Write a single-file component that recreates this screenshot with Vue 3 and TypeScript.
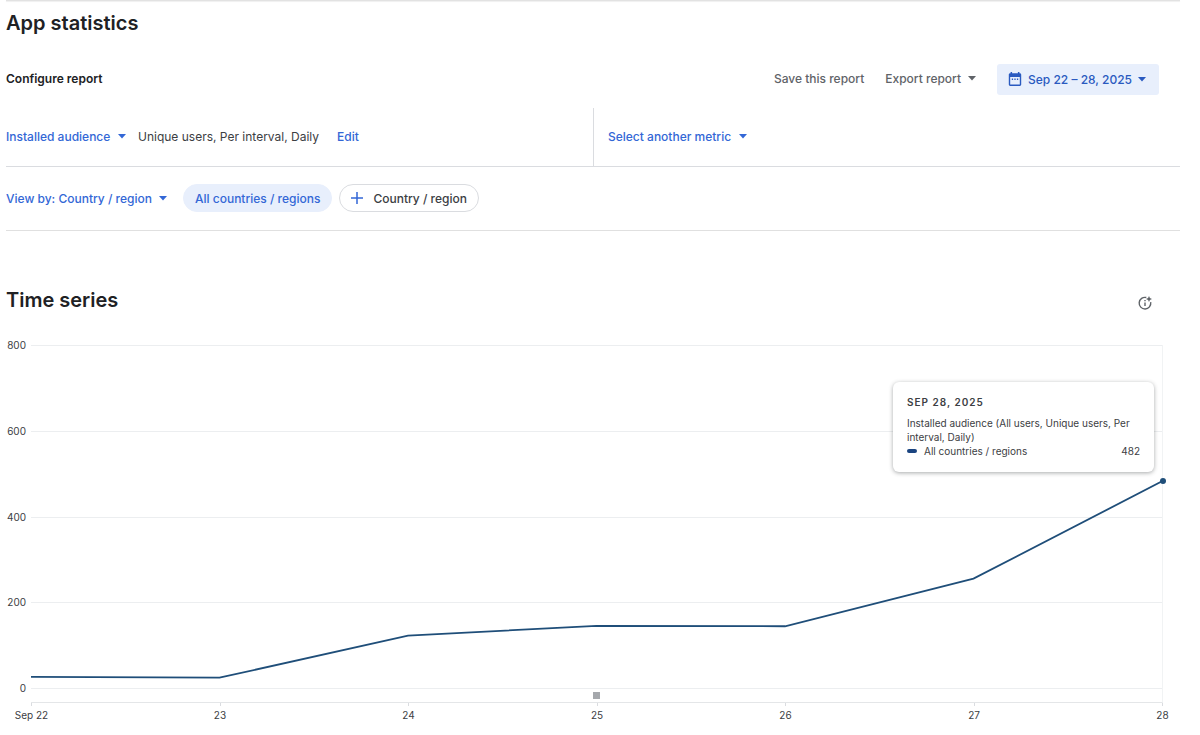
<script setup lang="ts">
import { computed, ref } from 'vue'

interface Point {
  label: string
  value: number
}

const metric = ref('Installed audience')
const secondMetric = ref('Select another metric')
const viewBy = ref('View by: Country / region')

const points: Point[] = [
  { label: 'Sep 22', value: 26 },
  { label: '23', value: 24 },
  { label: '24', value: 122 },
  { label: '25', value: 145 },
  { label: '26', value: 144 },
  { label: '27', value: 255 },
  { label: '28', value: 482 },
]
const yTicks = [800, 600, 400, 200, 0]

const step = 100
const scaleY = (value: number) => 800 - value
const line = computed(() => points.map((p, i) => `${i * step},${scaleY(p.value)}`).join(' '))
const last = computed(() => points[points.length - 1])
const lastTop = computed(() => `${(scaleY(last.value.value) / 800) * 100}%`)
</script>

<template>
  <main class="page">
    <div class="top-edge"></div>
    <h1 class="title">App statistics</h1>

    <section class="toolbar">
      <h2 class="subtitle">Configure report</h2>
      <div class="actions">
        <button type="button" class="text-button">Save this report</button>
        <button type="button" class="text-button">
          Export report
          <svg class="caret" viewBox="0 0 8 5"><path d="M0 0h8L4 4.600z" /></svg>
        </button>
        <button type="button" class="date-button">
          <svg class="calendar" viewBox="0 0 14 14">
            <path fill-rule="evenodd" d="M2.600 0h1.500v1.300h5.800V0h1.500v1.300h.4c.8 0 1.400.6 1.400 1.400v9.900c0 .8-.6 1.400-1.400 1.400H2.200c-.8 0-1.400-.6-1.400-1.400V2.700c0-.8.6-1.400 1.400-1.400h.4zM2.200 5v7.600h9.600V5z" />
            <path d="M3.800 6.600h1.300v1.300H3.800zM6.350 6.600h1.300v1.300h-1.300zM8.900 6.600h1.300v1.300H8.900z" />
          </svg>
          <span>Sep 22 – 28, 2025</span>
          <svg class="caret" viewBox="0 0 8 5"><path d="M0 0h8L4 4.600z" /></svg>
        </button>
      </div>
    </section>

    <section class="metrics">
      <div class="metric">
        <span class="dropdown">
          <select v-model="metric" aria-label="Metric">
            <option>Installed audience</option>
          </select>
          <svg class="caret" viewBox="0 0 8 5"><path d="M0 0h8L4 4.600z" /></svg>
        </span>
        <span class="detail">Unique users, Per interval, Daily</span>
        <a href="#edit" class="edit">Edit</a>
      </div>
      <div class="metric second">
        <span class="dropdown">
          <select v-model="secondMetric" aria-label="Second metric">
            <option>Select another metric</option>
          </select>
          <svg class="caret" viewBox="0 0 8 5"><path d="M0 0h8L4 4.600z" /></svg>
        </span>
      </div>
    </section>

    <section class="filters">
      <span class="dropdown">
        <select v-model="viewBy" aria-label="View by">
          <option>View by: Country / region</option>
        </select>
        <svg class="caret" viewBox="0 0 8 5"><path d="M0 0h8L4 4.600z" /></svg>
      </span>
      <div class="chips">
        <button type="button" class="chip selected">All countries / regions</button>
        <button type="button" class="chip">
          <svg class="plus" viewBox="0 0 12 12"><path d="M6 0v12M0 6h12" /></svg>
          Country / region
        </button>
      </div>
    </section>

    <section class="series">
      <header class="series-head">
        <h2 class="title">Time series</h2>
        <button type="button" class="info" aria-label="Chart insights">
          <svg viewBox="0 0 14 14">
            <path class="ring" d="M8.300 1.500A5.800 5.800 0 1 0 12.700 6.200" />
            <path class="stem" d="M7 6.400v3.600M7 4v1.300" />
            <path class="spark" d="M11 0l.9 2.100L14 3l-2.100.9L11 6l-.9-2.100L8 3l2.100-.9z" />
          </svg>
        </button>
      </header>

      <div class="chart">
        <div class="y-axis">
          <span v-for="tick in yTicks" :key="tick">{{ tick }}</span>
        </div>
        <div class="plot">
          <div class="area">
            <div class="grid">
              <i v-for="tick in yTicks" :key="tick"></i>
            </div>
            <svg class="line" viewBox="0 0 600 800" preserveAspectRatio="none">
              <polyline :points="line" />
            </svg>
            <span class="dot" :style="{ top: lastTop }"></span>
            <div class="tooltip" role="tooltip">
              <strong>SEP 28, 2025</strong>
              <p>Installed audience (All users, Unique users, Per interval, Daily)</p>
              <div class="row">
                <i class="swatch"></i>
                <span class="name">All countries / regions</span>
                <span>{{ last.value }}</span>
              </div>
            </div>
          </div>
          <div class="events"><i class="event"></i></div>
          <div class="x-axis">
            <span v-for="p in points" :key="p.label">{{ p.label }}</span>
          </div>
        </div>
      </div>
    </section>
  </main>
</template>

<style>
body {
  background: #fff;
}
</style>

<style scoped>
.page {
  box-sizing: border-box;
  padding: 0 20px 0 6px;
  font-family: Inter, 'Liberation Sans', sans-serif;
  font-size: 12px;
  color: #3c4043;
}
.top-edge {
  height: 1px;
  background: #e2e2e2;
  box-shadow: 0 1px 1px #eee;
}
.title {
  margin: 0;
  font-size: 20px;
  line-height: 28px;
  font-weight: 600;
  color: #202124;
}
h1.title {
  padding-top: 8px;
}
button,
select {
  font: inherit;
  font-weight: 500;
  margin: 0;
  padding: 0;
  border: 0;
  background: none;
  color: inherit;
}
.toolbar {
  display: flex;
  align-items: center;
  justify-content: space-between;
  margin-top: 27px;
  padding-right: 21px;
}
.subtitle {
  margin: 0;
  padding-bottom: 2px;
  font-size: 12px;
  font-weight: 600;
  color: #202124;
}
.actions {
  display: flex;
  align-items: center;
  gap: 21px;
}
.text-button {
  display: flex;
  align-items: center;
  gap: 7px;
  padding-bottom: 2px;
  color: #5f6368;
}
.caret {
  width: 8px;
  height: 5px;
  fill: currentColor;
}
.date-button {
  display: flex;
  align-items: center;
  height: 31px;
  padding: 0 13px 1px 11px;
  gap: 6px;
  border-radius: 3px;
  background: #e8effc;
  color: #2a5ac0;
}
.calendar {
  width: 14px;
  height: 14px;
  fill: currentColor;
}
.metrics {
  display: flex;
  margin-top: 13px;
  border-bottom: 1px solid #dadce0;
}
.metric {
  box-sizing: border-box;
  flex: 1 1 50%;
  display: flex;
  align-items: center;
  height: 58px;
  padding-bottom: 2px;
}
.second {
  padding-left: 14px;
  border-left: 1px solid #dadce0;
}
.dropdown {
  display: inline-grid;
  align-items: center;
  color: #3367d6;
}
.dropdown select {
  grid-area: 1 / 1;
  appearance: none;
  padding-right: 15px;
}
.dropdown .caret {
  grid-area: 1 / 1;
  justify-self: end;
  pointer-events: none;
}
.detail {
  margin: 0 18px 0 12px;
}
.edit {
  color: #3367d6;
  font-weight: 500;
  text-decoration: none;
}
.filters {
  display: flex;
  align-items: center;
  gap: 16px;
  box-sizing: border-box;
  height: 64px;
  padding-bottom: 1px;
  border-bottom: 1px solid #e0e0e0;
}
.chips {
  display: flex;
  gap: 7px;
}
.chip {
  box-sizing: border-box;
  display: flex;
  align-items: center;
  gap: 10px;
  height: 28px;
  padding: 0 11px;
  border: 1px solid #dadce0;
  border-radius: 14px;
}
.chip.selected {
  border-color: #e8effc;
  background: #e8effc;
  color: #3367d6;
}
.plus {
  width: 12px;
  height: 12px;
  fill: none;
  stroke: #3367d6;
  stroke-width: 1.5;
}
.series {
  padding: 55px 17px 0 0;
}
.series-head {
  display: flex;
  align-items: center;
  justify-content: space-between;
  padding-right: 11px;
}
.info {
  padding-top: 6px;
}
.info svg {
  display: block;
  width: 14px;
  height: 14px;
}
.ring,
.stem {
  fill: none;
  stroke: #5f6368;
  stroke-width: 1.4;
}
.spark {
  fill: #5f6368;
}
.chart {
  display: flex;
  gap: 5px;
  margin-top: 24px;
  font-size: 10px;
  line-height: 14px;
}
.y-axis {
  display: flex;
  flex-direction: column;
  justify-content: space-between;
  height: 357px;
  width: 20px;
  text-align: right;
}
.plot {
  flex: 1;
  padding-top: 7px;
}
.area {
  position: relative;
  height: 343px;
  border-right: 1px solid #f1f3f4;
}
.grid {
  display: flex;
  flex-direction: column;
  justify-content: space-between;
  height: 344px;
}
.grid i {
  height: 1px;
  background: #eceef0;
}
.line {
  position: absolute;
  inset: 0;
  width: 100%;
  height: 100%;
}
.line polyline {
  fill: none;
  stroke: #1f4e79;
  stroke-width: 1.8;
  vector-effect: non-scaling-stroke;
}
.dot {
  position: absolute;
  right: -4px;
  width: 6px;
  height: 6px;
  border-radius: 50%;
  background: #1f4e79;
  transform: translateY(-50%);
}
.events {
  display: flex;
  align-items: center;
  justify-content: center;
  height: 14px;
  border-right: 1px solid #f1f3f4;
  border-bottom: 1px solid #e4e6e8;
}
.event {
  width: 7px;
  height: 7px;
  background: #a5a8ac;
}
.x-axis {
  display: flex;
  justify-content: space-between;
}
.x-axis span {
  display: flex;
  flex-direction: column;
  align-items: center;
  width: 1px;
  white-space: nowrap;
}
.x-axis span::before {
  content: '';
  width: 1px;
  height: 3px;
  margin-bottom: 2px;
  background: #dadce0;
}
.tooltip {
  position: absolute;
  top: 37px;
  right: 8px;
  box-sizing: border-box;
  width: 261px;
  padding: 13px 14px 14px;
  border-radius: 6px;
  background: #fff;
  box-shadow: 0 1px 4px rgba(60, 64, 67, 0.45);
}
.tooltip strong {
  display: block;
  font-weight: 600;
  letter-spacing: 1px;
}
.tooltip p {
  margin: 7px 0 0;
}
.row {
  display: flex;
  align-items: center;
}
.swatch {
  width: 10px;
  height: 4px;
  margin-right: 7px;
  border-radius: 2px;
  background: #1a4480;
}
.name {
  flex: 1;
}
</style>
